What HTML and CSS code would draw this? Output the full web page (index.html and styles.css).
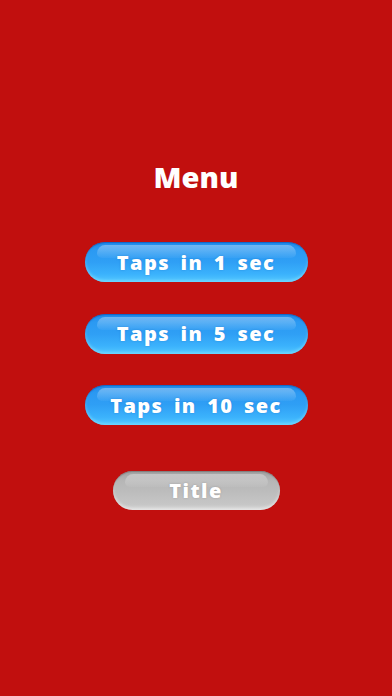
FILE: index.html
```html
<!DOCTYPE html>
<html>
<head>
<meta charset="utf-8">
<link rel="stylesheet" href="styles.css">
</head>
<body>
<main class="screen">
  <h1 class="title">Menu</h1>
  <div class="menu">
    <div class="btn blue"><span>Taps in 1 sec</span></div>
    <div class="btn blue"><span>Taps in 5 sec</span></div>
    <div class="btn blue"><span>Taps in 10 sec</span></div>
  </div>
  <div class="btn gray"><span>Title</span></div>
</main>
</body>
</html>
```
FILE: styles.css
```css
html, body {
  margin: 0;
  padding: 0;
  background: #c10f0e;
}
.screen {
  width: 392px;
  height: 696px;
  display: flex;
  flex-direction: column;
  align-items: center;
  font-family: "Open Sans", "Noto Sans", sans-serif;
  color: #fff;
}
.title {
  margin: 158px 0 0 0;
  height: 38px;
  line-height: 38px;
  font-size: 29px;
  font-weight: 800;
  letter-spacing: 0;
}
.menu {
  margin-top: 46px;
  display: flex;
  flex-direction: column;
  gap: 31.5px;
}
.btn {
  position: relative;
  height: 40px;
  border-radius: 20px;
  display: flex;
  align-items: center;
  justify-content: center;
  font-size: 20px;
  font-weight: 800;
  letter-spacing: 1.4px;
  word-spacing: 4px;
  box-sizing: border-box;
  overflow: hidden;
}
.btn::before {
  content: "";
  position: absolute;
  left: 12px;
  right: 12px;
  top: 3px;
  height: 13px;
  border-radius: 10px 10px 6px 6px;
  background: linear-gradient(to bottom, rgba(255,255,255,0.35), rgba(255,255,255,0.04));
}
.btn span { position: relative; }
.blue {
  width: 223px;
  background: linear-gradient(to bottom, #1f88e8 0%, #2b99f2 20%, #2f9ff5 50%, #3bb2fc 80%, #52c7ff 100%);
  box-shadow: inset 0 -2px 3px rgba(130,225,255,0.6), inset 0 1px 1px rgba(0,60,160,0.5);
  text-shadow: 0 0 2px rgba(0,80,170,0.35);
}
.gray {
  margin-top: 46px;
  width: 167px;
  height: 39px;
  background: linear-gradient(to bottom, #a0a0a0 0%, #b6b6b6 25%, #bdbdbd 55%, #c6c6c6 85%, #d4d4d4 100%);
  box-shadow: inset 0 -2px 3px rgba(240,240,240,0.6), inset 0 1px 1px rgba(90,90,90,0.5);
  text-shadow: 0 0 2px rgba(90,90,90,0.35);
}
```
